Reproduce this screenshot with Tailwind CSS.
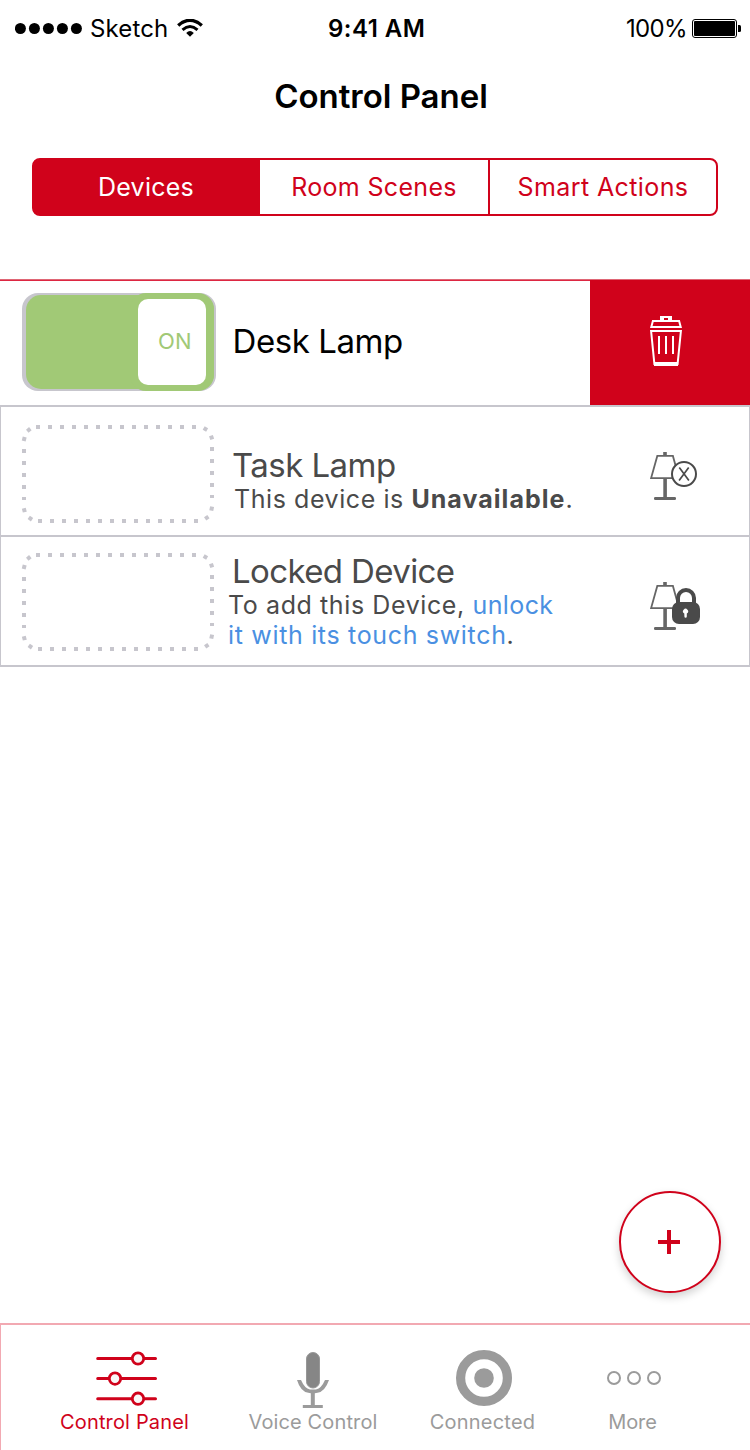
<!DOCTYPE html>
<html lang="en">
<head>
<meta charset="utf-8">
<title>Control Panel</title>
<script src="https://cdn.jsdelivr.net/npm/@tailwindcss/browser@4"></script>
</head>
<body class="bg-white">
<svg class="hidden">
  <defs>
    <!-- Dotted placeholder for a switch that cannot be used -->
    <symbol id="slot" viewBox="0 0 194 100">
      <g stroke="#c7c6cd" stroke-width="4" stroke-dasharray="4 8" fill="none">
        <path d="M15 3H176M17 97H178M3 25V76M191 23V74"/>
      </g>
      <g fill="#c7c6cd">
        <rect x="5.8" y="3.9" width="4" height="4" transform="rotate(-40 7.8 5.9)"/>
        <rect x="1.2" y="13" width="4" height="4" transform="rotate(-75 3.2 15)"/>
        <rect x="182.4" y="3" width="4" height="4" transform="rotate(30 184.4 5)"/>
        <rect x="188.6" y="11.5" width="4" height="4" transform="rotate(72 190.6 13.5)"/>
        <rect x="188.7" y="82.6" width="4" height="4" transform="rotate(12 190.7 84.6)"/>
        <rect x="183.8" y="91.7" width="4" height="4" transform="rotate(55 185.8 93.7)"/>
        <rect x="7.4" y="92.6" width="4" height="4" transform="rotate(35 9.4 94.6)"/>
        <rect x="1.3" y="84.2" width="4" height="4" transform="rotate(-14 3.3 86.2)"/>
      </g>
    </symbol>
    <symbol id="lamp" viewBox="0 0 52 50">
      <g fill="#666">
        <path d="M13.2 0h3.6v3.2h-3.6zM13.3 27h3.6v19h-3.6z"/>
        <rect x="4" y="45" width="22" height="3" rx="1.3"/>
      </g>
      <path d="M7.3 3.9H22.9L29 26.1H1.1z" fill="#fff" stroke="#666" stroke-width="1.8"/>
    </symbol>
  </defs>
</svg>
<main class="flex h-[1450px] w-[750px] flex-col overflow-hidden whitespace-nowrap font-['Inter',sans-serif] text-black">
  <header class="flex h-[57px] shrink-0 items-center text-[24px] leading-[31px]">
    <svg class="ml-[15px] w-[75px]" height="13" viewBox="0 0 75 13"><circle cx="5.4" cy="6.500" r="5.5"/><circle cx="19.4" cy="6.500" r="5.5"/><circle cx="33.4" cy="6.500" r="5.5"/><circle cx="47.4" cy="6.500" r="5.5"/><circle cx="61.4" cy="6.500" r="5.5"/></svg>
    <span class="w-[87px] tracking-[0.13px]">Sketch</span>
    <svg class="w-[151px]" height="19" viewBox="0 0 151 19">
      <path d="M1.200 6.5Q13 -3.8 24.800 6.5" fill="none" stroke="#000" stroke-width="3.4"/>
      <path d="M5.5 10.8Q13 4.2 20.5 10.8" fill="none" stroke="#000" stroke-width="3"/>
      <path d="M9.2 14Q13 10.2 16.8 14L13 17.8z"/>
    </svg>
    <span class="w-[298px] font-semibold tracking-[0.48px]">9:41 AM</span>
    <span class="w-[66px] tracking-[-0.68px]">100%</span>
    <svg width="50" height="19" viewBox="0 0 50 19"><rect x=".5" y=".5" width="44" height="18" rx="2.5" fill="none" stroke="#000"/><rect x="2" y="2" width="41" height="15" rx="1"/><path d="M46 6h1.5q1.5 0 1.5 1.5v4q0 1.5-1.5 1.5H46z"/></svg>
  </header>
  <h1 class="mt-[19px] pl-3 text-center text-[33px] font-semibold leading-10 tracking-[-0.03px]">Control Panel</h1>
  <nav class="mx-8 mt-[42px] flex h-[58px] shrink-0 rounded-lg border-2 border-[#d0021b] text-center text-[25px] leading-[54px] text-[#d0021b]">
    <div class="w-[226px] rounded-l-[4px] bg-[#d0021b] pr-0.5 tracking-[0.24px] text-white">Devices</div>
    <div class="w-[228px] tracking-[0.33px]">Room Scenes</div>
    <div class="w-[228px] border-l-2 border-[#d0021b] tracking-[0.4px]">Smart Actions</div>
  </nav>

  <section class="mt-[63px] flex h-[126px] shrink-0 border-t border-[#df6675] bg-white">
    <div class="flex w-[590px] border-t border-[#dd2742] pl-[22px]">
      <div class="relative mt-3 h-[98px] w-[194px] overflow-hidden rounded-2xl bg-[#c7c6cd]">
        <div class="absolute left-1 top-0.5 h-[94px] w-[188px] rounded-[15px] bg-[#a1c976]"></div>
        <div class="absolute left-[108px] top-0 h-[98px] w-[84px] rounded-2xl bg-[#a1c976]"></div>
        <div class="absolute left-[116px] top-1.5 h-[86px] w-[68px] rounded-[10px] bg-white pl-5 text-[22px] leading-[85px] tracking-[0.18px] text-[#a1c976]">ON</div>
      </div>
      <h2 class="ml-[16.5px] mt-10 text-[33px] leading-10 tracking-[-0.44px]">Desk Lamp</h2>
    </div>
    <div class="w-[160px] bg-[#d0021b] pl-[60px] pt-9">
      <svg width="32" height="50" viewBox="0 0 32 50" fill="none" stroke="#fff" stroke-width="2">
        <path fill="#fff" stroke="none" fill-rule="evenodd" d="M10 0H22V5H10zM14 2V4H18V2z"/>
        <path d="M2.9 5H29.1L30.7 11H1.3z"/>
        <path d="M1.1 15H30.9L27.6 48H4.4z"/>
        <path d="M4 48H28" stroke-width="4"/>
        <path d="M9 20V38M16 20V38M23 20V38"/>
      </svg>
    </div>
  </section>

  <section class="flex h-[130px] shrink-0 border-x border-t-2 border-[#c7c6cd] pl-5 text-[#4a4a4a]">
    <svg class="mt-[17px] h-[100px] w-[194px]"><use href="#slot"/></svg>
    <div class="ml-[17px] mt-10 w-[418px]">
      <h2 class="text-[33px] leading-9 tracking-[-0.55px]">Task Lamp</h2>
      <p class="ml-[2px] mt-px text-[25px] leading-[30px] tracking-[0.57px]">This device is <b class="font-bold tracking-[1.03px]">Unavailable</b>.</p>
    </div>
    <svg class="mt-[45px]" width="52" height="50" viewBox="0 0 52 50">
      <use href="#lamp" width="52" height="50"/>
      <circle cx="34" cy="22" r="12" fill="#fff" stroke="#4a4a4a" stroke-width="2"/>
      <path d="M29.3 15.6L38.9 28.6M38.7 15.6L29.1 28.6" stroke="#4a4a4a" stroke-width="1.7"/>
    </svg>
  </section>

  <section class="flex h-[132px] shrink-0 border-x border-y-2 border-[#c7c6cd] pl-5 text-[#4a4a4a]">
    <svg class="mt-[15px] h-[100px] w-[194px]"><use href="#slot"/></svg>
    <div class="ml-[13px] mt-4 w-[422px]">
      <h2 class="ml-1 text-[33px] leading-9 tracking-[-0.62px]">Locked Device</h2>
      <p class="mt-px text-[25px] leading-[30px] tracking-[0.6px]">To add this Device, <a class="tracking-[0.4px] text-[#4a90e2]">unlock</a><br><a class="tracking-[0.67px] text-[#4a90e2]">it with its touch switch</a>.</p>
    </div>
    <svg class="mt-[45px]" width="52" height="50" viewBox="0 0 52 50">
      <use href="#lamp" width="52" height="50"/>
      <path d="M28 22V16a8 8 0 0 1 16 0v6" fill="#fff" stroke="#4a4a4a" stroke-width="4"/>
      <rect x="22" y="20" width="28" height="22" rx="7" fill="#4a4a4a"/>
      <path d="M34.3 31.5a2.5 2.5 0 1 1 2.5 0V34.5a1.2 1.2 0 0 1-2.4 0z" fill="#fff"/>
    </svg>
  </section>

  <button class="mb-[30px] ml-[619px] mt-auto flex size-[102px] shrink-0 items-center justify-center rounded-full border-2 border-[#d0021b] bg-white shadow-[0_4px_8px_rgba(0,0,0,0.18)]">
    <svg width="24" height="24" viewBox="0 0 24 24" fill="#d0021b"><path d="M0 10H9V0h4V10h9v4H13V24H9V14H0z"/></svg>
  </button>

  <footer class="flex h-[127px] shrink-0 border-l border-t-2 border-[#f2a9b2] pl-[59px] text-[20px] leading-[30px] text-[#9b9b9b]">
    <div class="flex w-[129px] flex-col items-center pt-[25px] text-[#d0021b]">
      <svg width="64" height="57" viewBox="93 1350 64 57" class="overflow-visible" fill="#f8f8f8" stroke="#d0021b" stroke-width="3" stroke-linecap="round"><path d="M97.7 1358.5H155.5M97.7 1378.6H155.5M97.7 1398.7H155.5"/><g stroke-width="2.8"><circle cx="138" cy="1358.5" r="5.7"/><circle cx="115" cy="1378.6" r="5.7"/><circle cx="138" cy="1398.7" r="5.7"/></g></svg>
      <span class="tracking-[0.16px]">Control Panel</span>
    </div>
    <div class="ml-[59px] flex w-[130px] flex-col items-center pt-[25px]">
      <svg width="40" height="57" viewBox="293 1350 40 57" class="overflow-visible" fill="#9b9b9b"><rect x="306.5" y="1352.5" width="13" height="35.5" rx="6.5" fill="#868686" stroke="#979797"/><path d="M297 1380h4q3.6 8.4 9 9.4h6q5.4-1 9-9.4h4q-4 11.6-11.5 12.8l-2.7.4V1405h8v3h-20v-3h8v-11.8l-2.5-.4Q300.500 1391.600 297 1380z"/></svg>
      <span class="tracking-[0.13px]">Voice Control</span>
    </div>
    <div class="ml-[52px] flex w-[105px] flex-col items-center pt-[25px]">
      <svg width="60" height="57" viewBox="453 1350 60 57" class="overflow-visible" fill="none" stroke="#9b9b9b"><circle cx="484" cy="1378" r="23.400" stroke-width="9.200"/><circle cx="484" cy="1378" r="9.800" fill="#9b9b9b" stroke="none"/></svg>
      <span class="tracking-[0.21px]">Connected</span>
    </div>
    <div class="ml-[73px] flex w-[49px] flex-col items-center pt-[25px]">
      <svg width="60" height="57" viewBox="603 1350 60 57" class="overflow-visible" fill="none" stroke="#9b9b9b" stroke-width="2"><circle cx="614" cy="1378" r="6"/><circle cx="634" cy="1378" r="6"/><circle cx="654" cy="1378" r="6"/></svg>
      <span class="tracking-[-0.09px]">More</span>
    </div>
  </footer>
</main>
</body>
</html>
